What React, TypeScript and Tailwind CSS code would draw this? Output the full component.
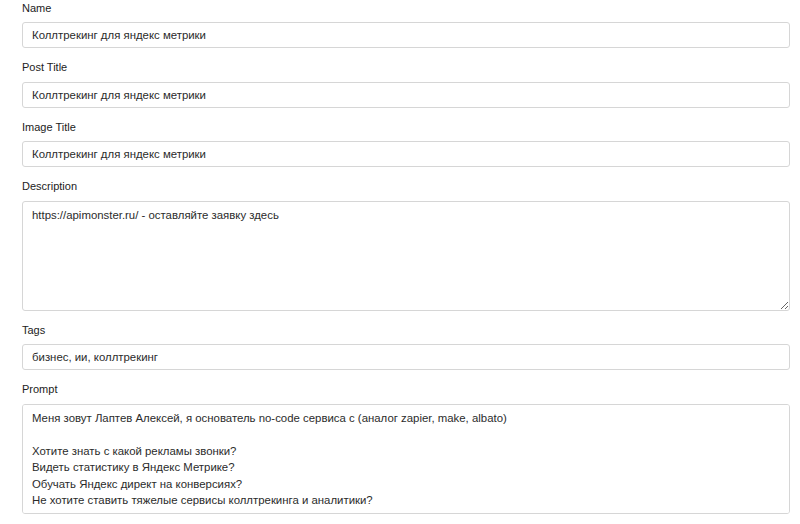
import React from 'react';

const prompt = `Меня зовут Лаптев Алексей, я основатель no-code сервиса с (аналог zapier, make, albato)

Хотите знать с какой рекламы звонки?
Видеть статистику в Яндекс Метрике?
Обучать Яндекс директ на конверсиях?
Не хотите ставить тяжелые сервисы коллтрекинга и аналитики?`;

const inputCls =
  'block w-full h-[26px] px-[9px] border border-[#d6d6d6] rounded-[3px] bg-white text-[11.4px] text-[#2b2b2b] outline-none';
const areaCls =
  'block w-full px-[9px] py-[5px] border border-[#d6d6d6] rounded-[3px] bg-white text-[11.4px] leading-[16.6px] text-[#2b2b2b] outline-none';

const Label = ({ children }: { children: React.ReactNode }) => (
  <label className="block text-[11px] leading-[18px] mb-[5.5px] text-[#222]">{children}</label>
);

const App = () => {
  return (
    <div
      className="min-h-screen bg-white pl-[22px] pr-[10px] -mt-[1.5px]"
      style={{ fontFamily: '"Liberation Sans", Arial, sans-serif' }}
    >
      <div className="flex flex-col gap-[10px]">
        {/* Name */}
        <div>
          <Label>Name</Label>
          <input className={inputCls} defaultValue="Коллтрекинг для яндекс метрики" />
        </div>

        {/* Post title */}
        <div>
          <Label>Post Title</Label>
          <input className={inputCls} defaultValue="Коллтрекинг для яндекс метрики" />
        </div>

        {/* Image title */}
        <div>
          <Label>Image Title</Label>
          <input className={inputCls} defaultValue="Коллтрекинг для яндекс метрики" />
        </div>

        {/* Description */}
        <div>
          <Label>Description</Label>
          <textarea
            className={`${areaCls} h-[110px]`}
            defaultValue="https://apimonster.ru/ - оставляйте заявку здесь"
          />
        </div>

        {/* Tags */}
        <div>
          <Label>Tags</Label>
          <input className={inputCls} defaultValue="бизнес, ии, коллтрекинг" />
        </div>

        {/* Prompt */}
        <div>
          <Label>Prompt</Label>
          <textarea className={`${areaCls} h-[110px] resize-none`} defaultValue={prompt} />
        </div>
      </div>
    </div>
  );
};

export default App;
